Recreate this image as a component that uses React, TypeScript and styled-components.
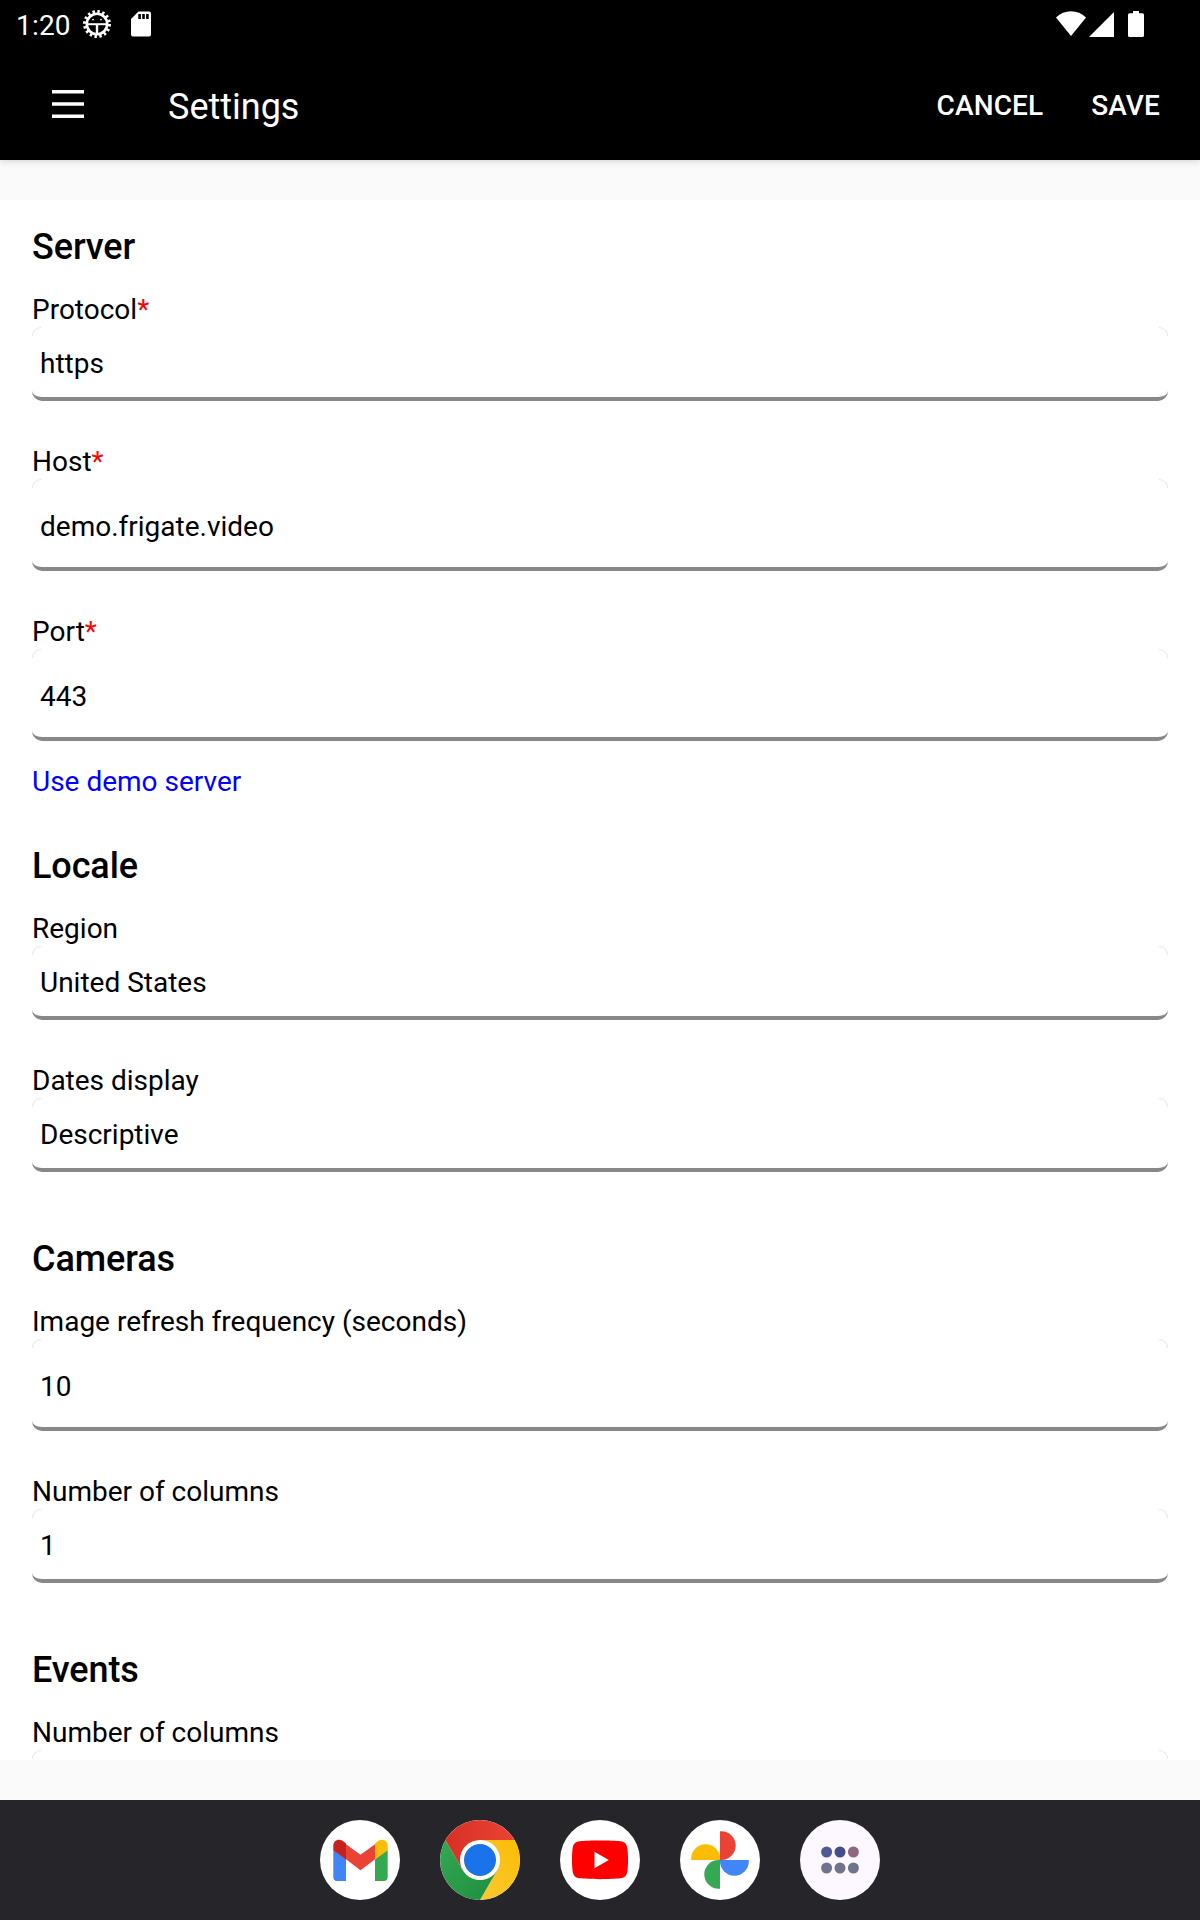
import React from "react";
import styled, { createGlobalStyle } from "styled-components";

const GlobalStyle = createGlobalStyle`
  *, *::before, *::after { box-sizing: border-box; }
  body { margin: 0; background: #fafafa; }
`;

const Screen = styled.div`
  width: 1200px;
  height: 1920px;
  display: flex;
  flex-direction: column;
  overflow: hidden;
  background: #fafafa;
  color: #000;
  font-family: Roboto, "Noto Sans", sans-serif;
  font-size: 28px;
  line-height: 33px;
`;

const TopArea = styled.header`
  flex: none;
  height: 160px;
  background: #000;
  color: #fff;
  box-shadow: 0 1px 7px rgba(0, 0, 0, 0.17);
`;

const StatusBar = styled.div`
  height: 48px;
  padding: 0 56px 0 16px;
  display: flex;
  align-items: center;
  justify-content: space-between;
`;

const StatusGroup = styled.div`
  display: flex;
  align-items: center;
  svg { display: block; }
`;

const Clock = styled.span`
  width: 67px;
  padding-top: 2px;
  letter-spacing: 0.2px;
`;

const SdSlot = styled.span`
  margin-left: 20px;
`;

const AppBar = styled.div`
  height: 112px;
  padding: 0 40px 0 52px;
  display: flex;
  align-items: center;
`;

const MenuButton = styled.button`
  margin: 0 84px 0 0;
  padding: 0;
  border: 0;
  background: none;
  svg { display: block; }
`;

const PageTitle = styled.h1`
  flex: 1;
  margin: 0;
  padding-top: 6px;
  font-size: 36px;
  line-height: 42px;
  font-weight: 400;
`;

const BarAction = styled.button`
  margin: 0 0 0 48px;
  padding: 3px 0 0;
  border: 0;
  background: none;
  color: #fff;
  font: 500 28px/33px Roboto, "Noto Sans", sans-serif;
  letter-spacing: 0.12px;
`;

const Content = styled.main`
  flex: none;
  height: 1560px;
  margin: 40px 0;
  padding: 26px 32px 0;
  overflow: hidden;
  background: #fff;
`;

const Section = styled.section<{ $gap: number }>`
  margin-bottom: ${(p) => p.$gap}px;
`;

const SectionTitle = styled.h2`
  margin: 0 0 25px;
  font-size: 36px;
  line-height: 42px;
  font-weight: 500;
  letter-spacing: -0.1px;
`;

const Field = styled.div`
  & + & { margin-top: 44px; }
`;

const Label = styled.label`
  display: block;
  height: 34px;
`;

const Required = styled.span`
  color: #f00;
`;

const ValueBox = styled.div<{ $tall?: boolean }>`
  position: relative;
  height: ${(p) => (p.$tall ? 92 : 74)}px;
  padding: ${(p) => (p.$tall ? 31 : 20)}px 8px 0;
  border-bottom: 4px solid #888;
  border-radius: 10px;

  &::before,
  &::after {
    content: "";
    position: absolute;
    top: 0;
    width: 9px;
    height: 9px;
    border-top: 1px solid #e6e6e6;
  }
  &::before {
    left: 0;
    border-left: 1px solid #e6e6e6;
    border-top-left-radius: 9px;
  }
  &::after {
    right: 0;
    border-right: 1px solid #e6e6e6;
    border-top-right-radius: 9px;
  }
`;

const DemoLink = styled.a`
  display: block;
  margin-top: 24px;
  color: #00f;
`;

const Dock = styled.nav`
  flex: none;
  height: 120px;
  display: flex;
  align-items: center;
  justify-content: center;
  gap: 40px;
  background: #26252a;
`;

const AppIcon = styled.span<{ $bg?: string }>`
  width: 80px;
  height: 80px;
  border-radius: 50%;
  overflow: hidden;
  background: ${(p) => p.$bg ?? "#fff"};
  svg { display: block; }
`;

type FieldData = { label: string; value?: string; required?: boolean; tall?: boolean };
type SectionData = { title: string; fields: FieldData[]; link?: string; gap: number };

const sections: SectionData[] = [
  {
    title: "Server",
    gap: 47,
    link: "Use demo server",
    fields: [
      { label: "Protocol", value: "https", required: true },
      { label: "Host", value: "demo.frigate.video", required: true, tall: true },
      { label: "Port", value: "443", required: true, tall: true },
    ],
  },
  {
    title: "Locale",
    gap: 66,
    fields: [
      { label: "Region", value: "United States" },
      { label: "Dates display", value: "Descriptive" },
    ],
  },
  {
    title: "Cameras",
    gap: 66,
    fields: [
      { label: "Image refresh frequency (seconds)", value: "10", tall: true },
      { label: "Number of columns", value: "1" },
    ],
  },
  { title: "Events", gap: 0, fields: [{ label: "Number of columns" }] },
];

const MenuIcon = () => (
  <svg width="32" height="28" viewBox="0 0 32 28" fill="#fff">
    <path d="M0 0h32v3.500H0zM0 12.250h32v3.500H0zM0 24.500h32V28H0z" />
  </svg>
);

const BugIcon = () => (
  <svg width="28" height="28" viewBox="0 0 28 28" fill="none" stroke="#fff">
    <circle cx="14" cy="14" r="12.4" strokeWidth="3.2" strokeDasharray="2.4 2.470" />
    <circle cx="14" cy="14" r="10.2" strokeWidth="2.6" />
    <path d="M4 14.200h20" strokeWidth="2" />
    <path d="M14 14v10" strokeWidth="2.4" />
    <circle cx="10" cy="9.600" r="0.900" fill="#fff" stroke="none" />
    <circle cx="18" cy="9.600" r="0.900" fill="#fff" stroke="none" />
  </svg>
);

const SdIcon = () => (
  <svg width="20" height="26" viewBox="0 0 20 26">
    <path d="M7.5 0.5H18a2 2 0 0 1 2 2V23.500a2 2 0 0 1-2 2H2a2 2 0 0 1-2-2V8z" fill="#fff" />
    <path d="M7.300 3h2.600v5H7.300zM11.200 3h2.600v5h-2.600zM15.100 3h2.600v5h-2.600z" fill="#000" />
  </svg>
);

const SignalIcons = () => (
  <svg width="88" height="28" viewBox="0 0 88 28" fill="#fff">
    <path d="M0 7.500Q6.500 1.300 15 1.300T30 7.500L15 26z" />
    <path d="M58 2v25H33z" />
    <path d="M77 1h6v2.300h3.500q1.500 0 1.500 1.500V25.500q0 1.500-1.500 1.500h-13q-1.500 0-1.500-1.500V4.800q0-1.500 1.500-1.500H77z" />
  </svg>
);

const GmailIcon = () => (
  <svg width="80" height="80" viewBox="0 0 80 80">
    <path d="M13.300 30L26 39V61h-9a3.700 3.700 0 0 1-3.700-3.700z" fill="#4285f4" />
    <path d="M67.700 30L55 39V61h9a3.700 3.700 0 0 0 3.700-3.700z" fill="#34a853" />
    <path d="M26 24.300L40.500 34.700 55 24.300V39.300L40.500 50.200 26 39.300z" fill="#ea4335" />
    <path d="M13.300 30.300V25.500c0-5 5.300-7.500 9.200-4.700L26 23.500V39.400z" fill="#c5221f" />
    <path d="M67.700 30.300V25.500c0-5-5.300-7.500-9.200-4.700L55 23.500V39.400z" fill="#fbbc04" />
  </svg>
);

const ChromeIcon = () => (
  <svg width="80" height="80" viewBox="0 0 80 80">
    <defs>
      <linearGradient id="cr" x1="0" x2="1"><stop stopColor="#d93025" /><stop offset="1" stopColor="#ea4335" /></linearGradient>
      <linearGradient id="cy" x1="1" y1="0" x2="0" y2="1"><stop stopColor="#fbbc04" /><stop offset="1" stopColor="#fcc934" /></linearGradient>
      <linearGradient id="cg" x1="0" y1="0" x2="1" y2="1"><stop stopColor="#34a853" /><stop offset="1" stopColor="#1e8e3e" /></linearGradient>
    </defs>
    <path d="M40 20H74.640A40 40 0 0 1 40 80L57.320 50z" fill="url(#cy)" />
    <path d="M57.320 50L40 80A40 40 0 0 1 5.360 20L22.680 50L40 60z" fill="url(#cg)" />
    <path d="M5.360 20A40 40 0 0 1 74.640 20H40L22.680 50z" fill="url(#cr)" />
    <circle cx="40" cy="40" r="20" fill="#fff" />
    <circle cx="40" cy="40" r="16" fill="#1a73e8" />
  </svg>
);

const YouTubeIcon = () => (
  <svg width="80" height="80" viewBox="0 0 80 80">
    <path d="M40 20.500c8 0 16 .2 20.500.8 4.200.6 6.200 2.800 6.800 6.500 1 6 1 18 0 24-.6 3.700-2.600 5.900-6.800 6.500-9 1.100-32 1.100-41 0-4.200-.6-6.200-2.800-6.800-6.500-1-6-1-18 0-24 .6-3.700 2.600-5.900 6.800-6.500 4.500-.6 12.500-.8 20.500-.8z" fill="#f00" />
    <path d="M34.500 31.800L48.800 40l-14.300 8.200z" fill="#fff" />
  </svg>
);

const PhotosIcon = () => (
  <svg width="80" height="80" viewBox="0 0 80 80">
    <path d="M40 11.200h1.300a14.400 14.400 0 0 1 0 28.800H40z" fill="#ea4335" />
    <path d="M68.800 40v1.300a14.400 14.400 0 0 1-28.800 0V40z" fill="#4285f4" />
    <path d="M40 68.800h-1.300a14.400 14.400 0 0 1 0-28.800H40z" fill="#34a853" />
    <path d="M11.200 40v-1.300a14.400 14.400 0 0 1 28.800 0V40z" fill="#fbbc04" />
  </svg>
);

const dotColors = ["#4f5b93", "#434e88", "#8d6680", "#70748a", "#70748a", "#70748a"];

const AllAppsIcon = () => (
  <svg width="80" height="80" viewBox="0 0 80 80">
    {dotColors.map((color, i) => (
      <circle key={i} cx={26.600 + (i % 3) * 13.400} cy={i < 3 ? 32 : 48} r="5.500" fill={color} />
    ))}
  </svg>
);

export default function App() {
  return (
    <Screen>
      <GlobalStyle />
      <TopArea>
        <StatusBar>
          <StatusGroup>
            <Clock>1:20</Clock>
            <BugIcon />
            <SdSlot><SdIcon /></SdSlot>
          </StatusGroup>
          <StatusGroup><SignalIcons /></StatusGroup>
        </StatusBar>
        <AppBar>
          <MenuButton aria-label="Menu"><MenuIcon /></MenuButton>
          <PageTitle>Settings</PageTitle>
          <BarAction>CANCEL</BarAction>
          <BarAction>SAVE</BarAction>
        </AppBar>
      </TopArea>
      <Content>
        {sections.map((section) => (
          <Section key={section.title} $gap={section.gap}>
            <SectionTitle>{section.title}</SectionTitle>
            {section.fields.map((field) => (
              <Field key={field.label}>
                <Label>
                  {field.label}
                  {field.required && <Required>*</Required>}
                </Label>
                <ValueBox $tall={field.tall}>{field.value}</ValueBox>
              </Field>
            ))}
            {section.link && <DemoLink>{section.link}</DemoLink>}
          </Section>
        ))}
      </Content>
      <Dock>
        <AppIcon><GmailIcon /></AppIcon>
        <AppIcon><ChromeIcon /></AppIcon>
        <AppIcon><YouTubeIcon /></AppIcon>
        <AppIcon><PhotosIcon /></AppIcon>
        <AppIcon $bg="#fdf8ff"><AllAppsIcon /></AppIcon>
      </Dock>
    </Screen>
  );
}
